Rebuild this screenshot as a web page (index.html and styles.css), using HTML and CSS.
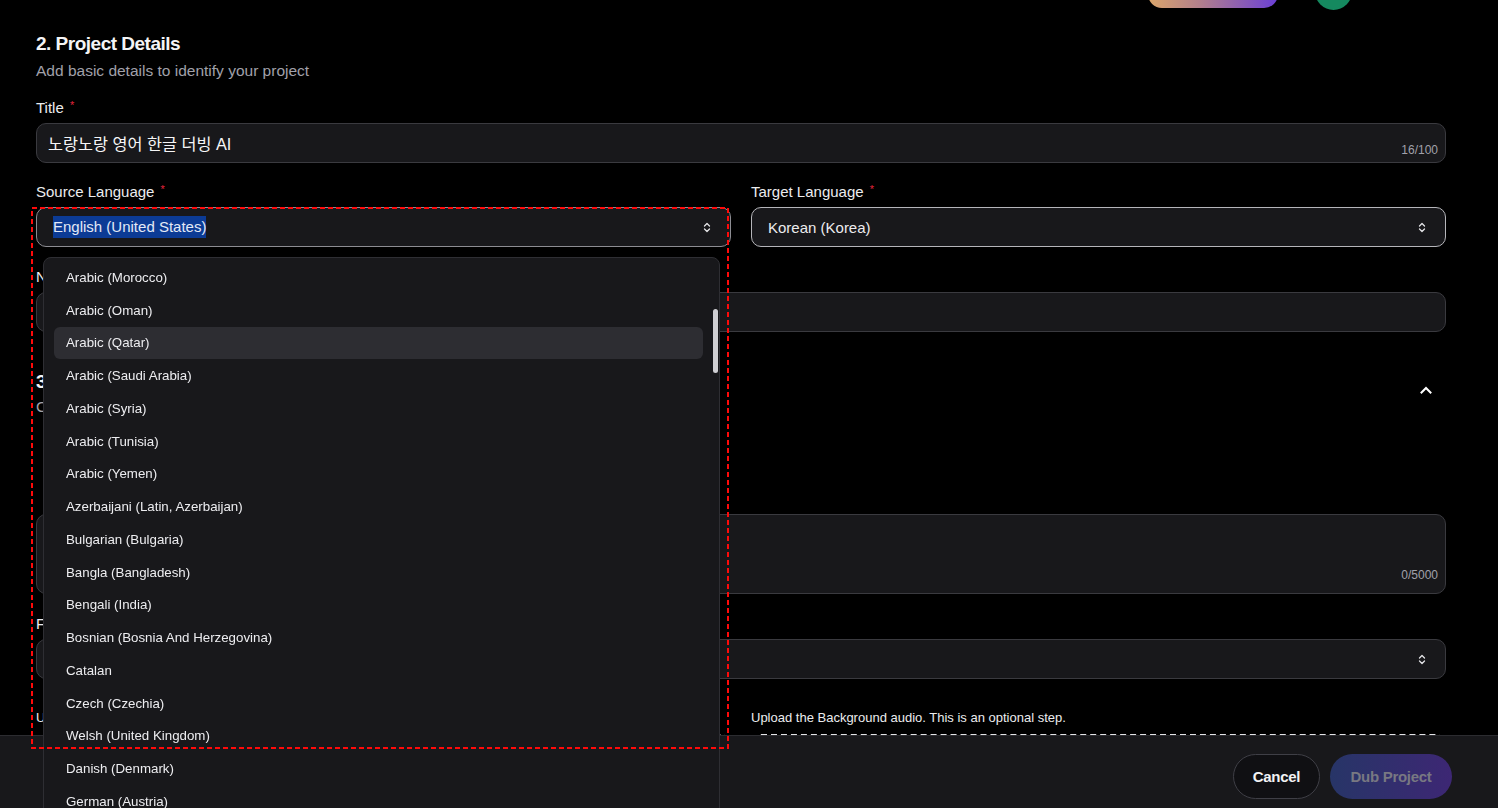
FILE: index.html
```html
<!DOCTYPE html>
<html>
<head>
<meta charset="UTF-8" /><title>Dub Project</title>
<link rel="stylesheet" href="styles.css">
</head>
<body>
<div class="topbar">
	<span class="credits"></span>
	<span class="avatar"></span>
</div>

<main class="page">
	<section>
		<h2 class="section-title">2. Project Details</h2>
		<p class="section-sub">Add basic details to identify your project</p>

		<div class="field first">
			<label>Title <span class="req">*</span></label>
			<div class="input title-input">노랑노랑 영어 한글 더빙 AI<span class="counter">16/100</span></div>
		</div>

		<div class="row langs">
			<div class="field source">
				<label>Source Language <span class="req">*</span></label>
				<div class="input select source-select">
					<span class="picked">English (United States)</span>
					<svg class="updown" width="8" height="13" viewBox="0 0 8 13"><path d="M1.5 5L4 2.5L6.5 5M1.5 8L4 10.5L6.5 8" fill="none" stroke="#e4e4e7" stroke-width="1.3" stroke-linecap="round" stroke-linejoin="round"/></svg>
				</div>

				<ul class="listbox">
					<li>Arabic (Morocco)</li>
					<li>Arabic (Oman)</li>
					<li class="active">Arabic (Qatar)</li>
					<li>Arabic (Saudi Arabia)</li>
					<li>Arabic (Syria)</li>
					<li>Arabic (Tunisia)</li>
					<li>Arabic (Yemen)</li>
					<li>Azerbaijani (Latin, Azerbaijan)</li>
					<li>Bulgarian (Bulgaria)</li>
					<li>Bangla (Bangladesh)</li>
					<li>Bengali (India)</li>
					<li>Bosnian (Bosnia And Herzegovina)</li>
					<li>Catalan</li>
					<li>Czech (Czechia)</li>
					<li>Welsh (United Kingdom)</li>
					<li>Danish (Denmark)</li>
					<li>German (Austria)</li>
					<span class="thumb"></span>
				</ul>

				<svg class="marker" width="698" height="542" viewBox="0 0 698 542"><rect x="1" y="1" width="696" height="540" fill="none" stroke="#ff0a0a" stroke-width="2" stroke-dasharray="5 3"/></svg>
			</div>

			<div class="field">
				<label>Target Language <span class="req">*</span></label>
				<div class="input select target-select">
					<span>Korean (Korea)</span>
					<svg class="updown" width="8" height="13" viewBox="0 0 8 13"><path d="M1.5 5L4 2.5L6.5 5M1.5 8L4 10.5L6.5 8" fill="none" stroke="#e4e4e7" stroke-width="1.3" stroke-linecap="round" stroke-linejoin="round"/></svg>
				</div>
			</div>
		</div>

		<div class="field">
			<label>Number of Speakers</label>
			<div class="input"></div>
		</div>
	</section>

	<section class="section-3">
		<div class="section-head">
			<div>
				<h2 class="section-title">3. Customize Voice</h2>
				<p class="section-sub">Choose how the dubbed voice sounds</p>
			</div>
			<svg class="collapse" width="12" height="8" viewBox="0 0 12 8"><path d="M1.5 6.5L6 2L10.5 6.5" fill="none" stroke="#fff" stroke-width="2" stroke-linecap="square"/></svg>
		</div>

		<div class="field notes">
			<div class="input textarea"><span class="counter">0/5000</span></div>
		</div>

		<div class="field">
			<label>Formality</label>
			<div class="input select">
				<span></span>
				<svg class="updown" width="8" height="13" viewBox="0 0 8 13"><path d="M1.5 5L4 2.5L6.5 5M1.5 8L4 10.5L6.5 8" fill="none" stroke="#e4e4e7" stroke-width="1.3" stroke-linecap="round" stroke-linejoin="round"/></svg>
			</div>
		</div>

		<div class="row uploads">
			<div>
				<p class="hint">Upload the video you want to dub.</p>
				<div class="dropzone"></div>
			</div>
			<div>
				<p class="hint">Upload the Background audio. This is an optional step.</p>
				<div class="dropzone"></div>
			</div>
		</div>
	</section>
</main>

<footer class="footer">
	<button class="btn cancel">Cancel</button>
	<button class="btn dub">Dub Project</button>
</footer>
</body>
</html>
```

FILE: styles.css
```css
* {
	padding: 0;
	margin: 0;
	box-sizing: border-box;
}
html, body {
	height: 100%;
	overflow: hidden;
}
body {
	background: #000;
	color: #ececee;
	font: 15px "Liberation Sans", "Noto Sans CJK KR", sans-serif;
}

/* top bar (scrolled mostly out of view) */
.topbar {
	height: 10px;
	display: flex;
	justify-content: flex-end;
	align-items: flex-end;
	gap: 37px;
	padding-right: 146px;
}
.credits {
	width: 130px;
	height: 40px;
	margin-bottom: 2px;
	border-radius: 14px;
	background: linear-gradient(90deg, #dba66b, #b27f8c 40%, #6a3fd6);
}
.avatar {
	width: 37px;
	height: 37px;
	border-radius: 50%;
	background: #15895f;
}

.page {
	padding: 22px 52px 0 36px;
}
.section-title {
	font-size: 19px;
	font-weight: 700;
	line-height: 24px;
	letter-spacing: -0.5px;
	color: #f4f4f5;
}
.section-sub {
	margin-top: 5px;
	font-size: 15.5px;
	line-height: 20px;
	color: #a1a1aa;
}

.row {
	display: grid;
	grid-template-columns: 1fr 1fr;
	gap: 20px;
}
.field {
	margin-top: 20px;
}
.field.first {
	margin-top: 17px;
}
.langs .field {
	margin-top: 19px;
}
label {
	display: block;
	height: 20px;
	line-height: 20px;
	margin-bottom: 5px;
	color: #ececee;
}
.req {
	position: relative;
	top: -4px;
	margin-left: 2px;
	font-size: 11px;
	line-height: 0;
	color: #e5243b;
}

.input {
	position: relative;
	height: 40px;
	display: flex;
	align-items: center;
	padding: 0 11px;
	background: #18181b;
	border: 1px solid #3a3a3f;
	border-radius: 10px;
}
.title-input {
	font-size: 16.3px;
	color: #f6f6f7;
}
.counter {
	position: absolute;
	right: 7px;
	bottom: 5px;
	font-size: 12px;
	line-height: 14px;
	color: #a1a1aa;
}
.select {
	justify-content: space-between;
	padding: 0 19px 0 16px;
}
.source-select {
	border-color: #8c8c92;
}
.target-select {
	border-color: #b5b5ba;
}
.picked {
	display: inline-block;
	line-height: 22px;
	background: #0c3b95;
	color: #e3e9f6;
}
.updown {
	display: block;
}

/* open listbox */
.source {
	position: relative;
}
.listbox {
	position: absolute;
	left: 7px;
	top: 75px;
	width: 677px;
	height: 560px;
	padding: 3px 16px 0 10px;
	list-style: none;
	overflow: hidden;
	background: #18181b;
	border: 1px solid #2e2e33;
	border-radius: 8px;
	z-index: 10;
}
.listbox li {
	height: 32.75px;
	display: flex;
	align-items: center;
	padding-left: 12px;
	font-size: 13.3px;
	color: #ededf0;
	border-radius: 6px;
}
.listbox li.active {
	background: #2d2d32;
}
.thumb {
	position: absolute;
	right: 1px;
	top: 51px;
	width: 5px;
	height: 64px;
	border-radius: 3px;
	background: #cfcfd3;
}
.marker {
	position: absolute;
	left: -5px;
	top: 25px;
	z-index: 11;
}

/* section 3 */
.section-3 {
	margin-top: 38px;
}
.section-head {
	display: flex;
	justify-content: space-between;
	align-items: flex-start;
}
.section-head .section-sub {
	margin-top: 3px;
}
.collapse {
	display: block;
	margin: 16px 14px 0 0;
}
.field.notes {
	margin-top: 97px;
}
.textarea {
	height: 80px;
}
.textarea .counter {
	bottom: 11px;
}
.uploads {
	margin-top: 30px;
}
.hint {
	font-size: 13px;
	line-height: 18px;
	color: #ececee;
	margin-bottom: 7px;
}
.dropzone {
	height: 150px;
	border: 2px dashed #e4e4e7;
	border-radius: 10px;
}

/* footer */
.footer {
	position: fixed;
	left: 0;
	right: 0;
	bottom: 0;
	height: 73px;
	display: flex;
	justify-content: flex-end;
	align-items: flex-start;
	gap: 10px;
	padding: 18px 46px 0 0;
	background: #18181b;
	border-top: 1px solid #2c2c30;
	z-index: 5;
}
.btn {
	height: 45px;
	border-radius: 23px;
	font: 700 15px "Liberation Sans", sans-serif;
	letter-spacing: -0.3px;
	cursor: pointer;
}
.cancel {
	width: 87px;
	background: #101013;
	color: #f2f2f3;
	border: 1px solid #3f3f46;
}
.dub {
	width: 122px;
	background: linear-gradient(90deg, #273567, #3d2774);
	color: #787882;
	border: none;
}
```
